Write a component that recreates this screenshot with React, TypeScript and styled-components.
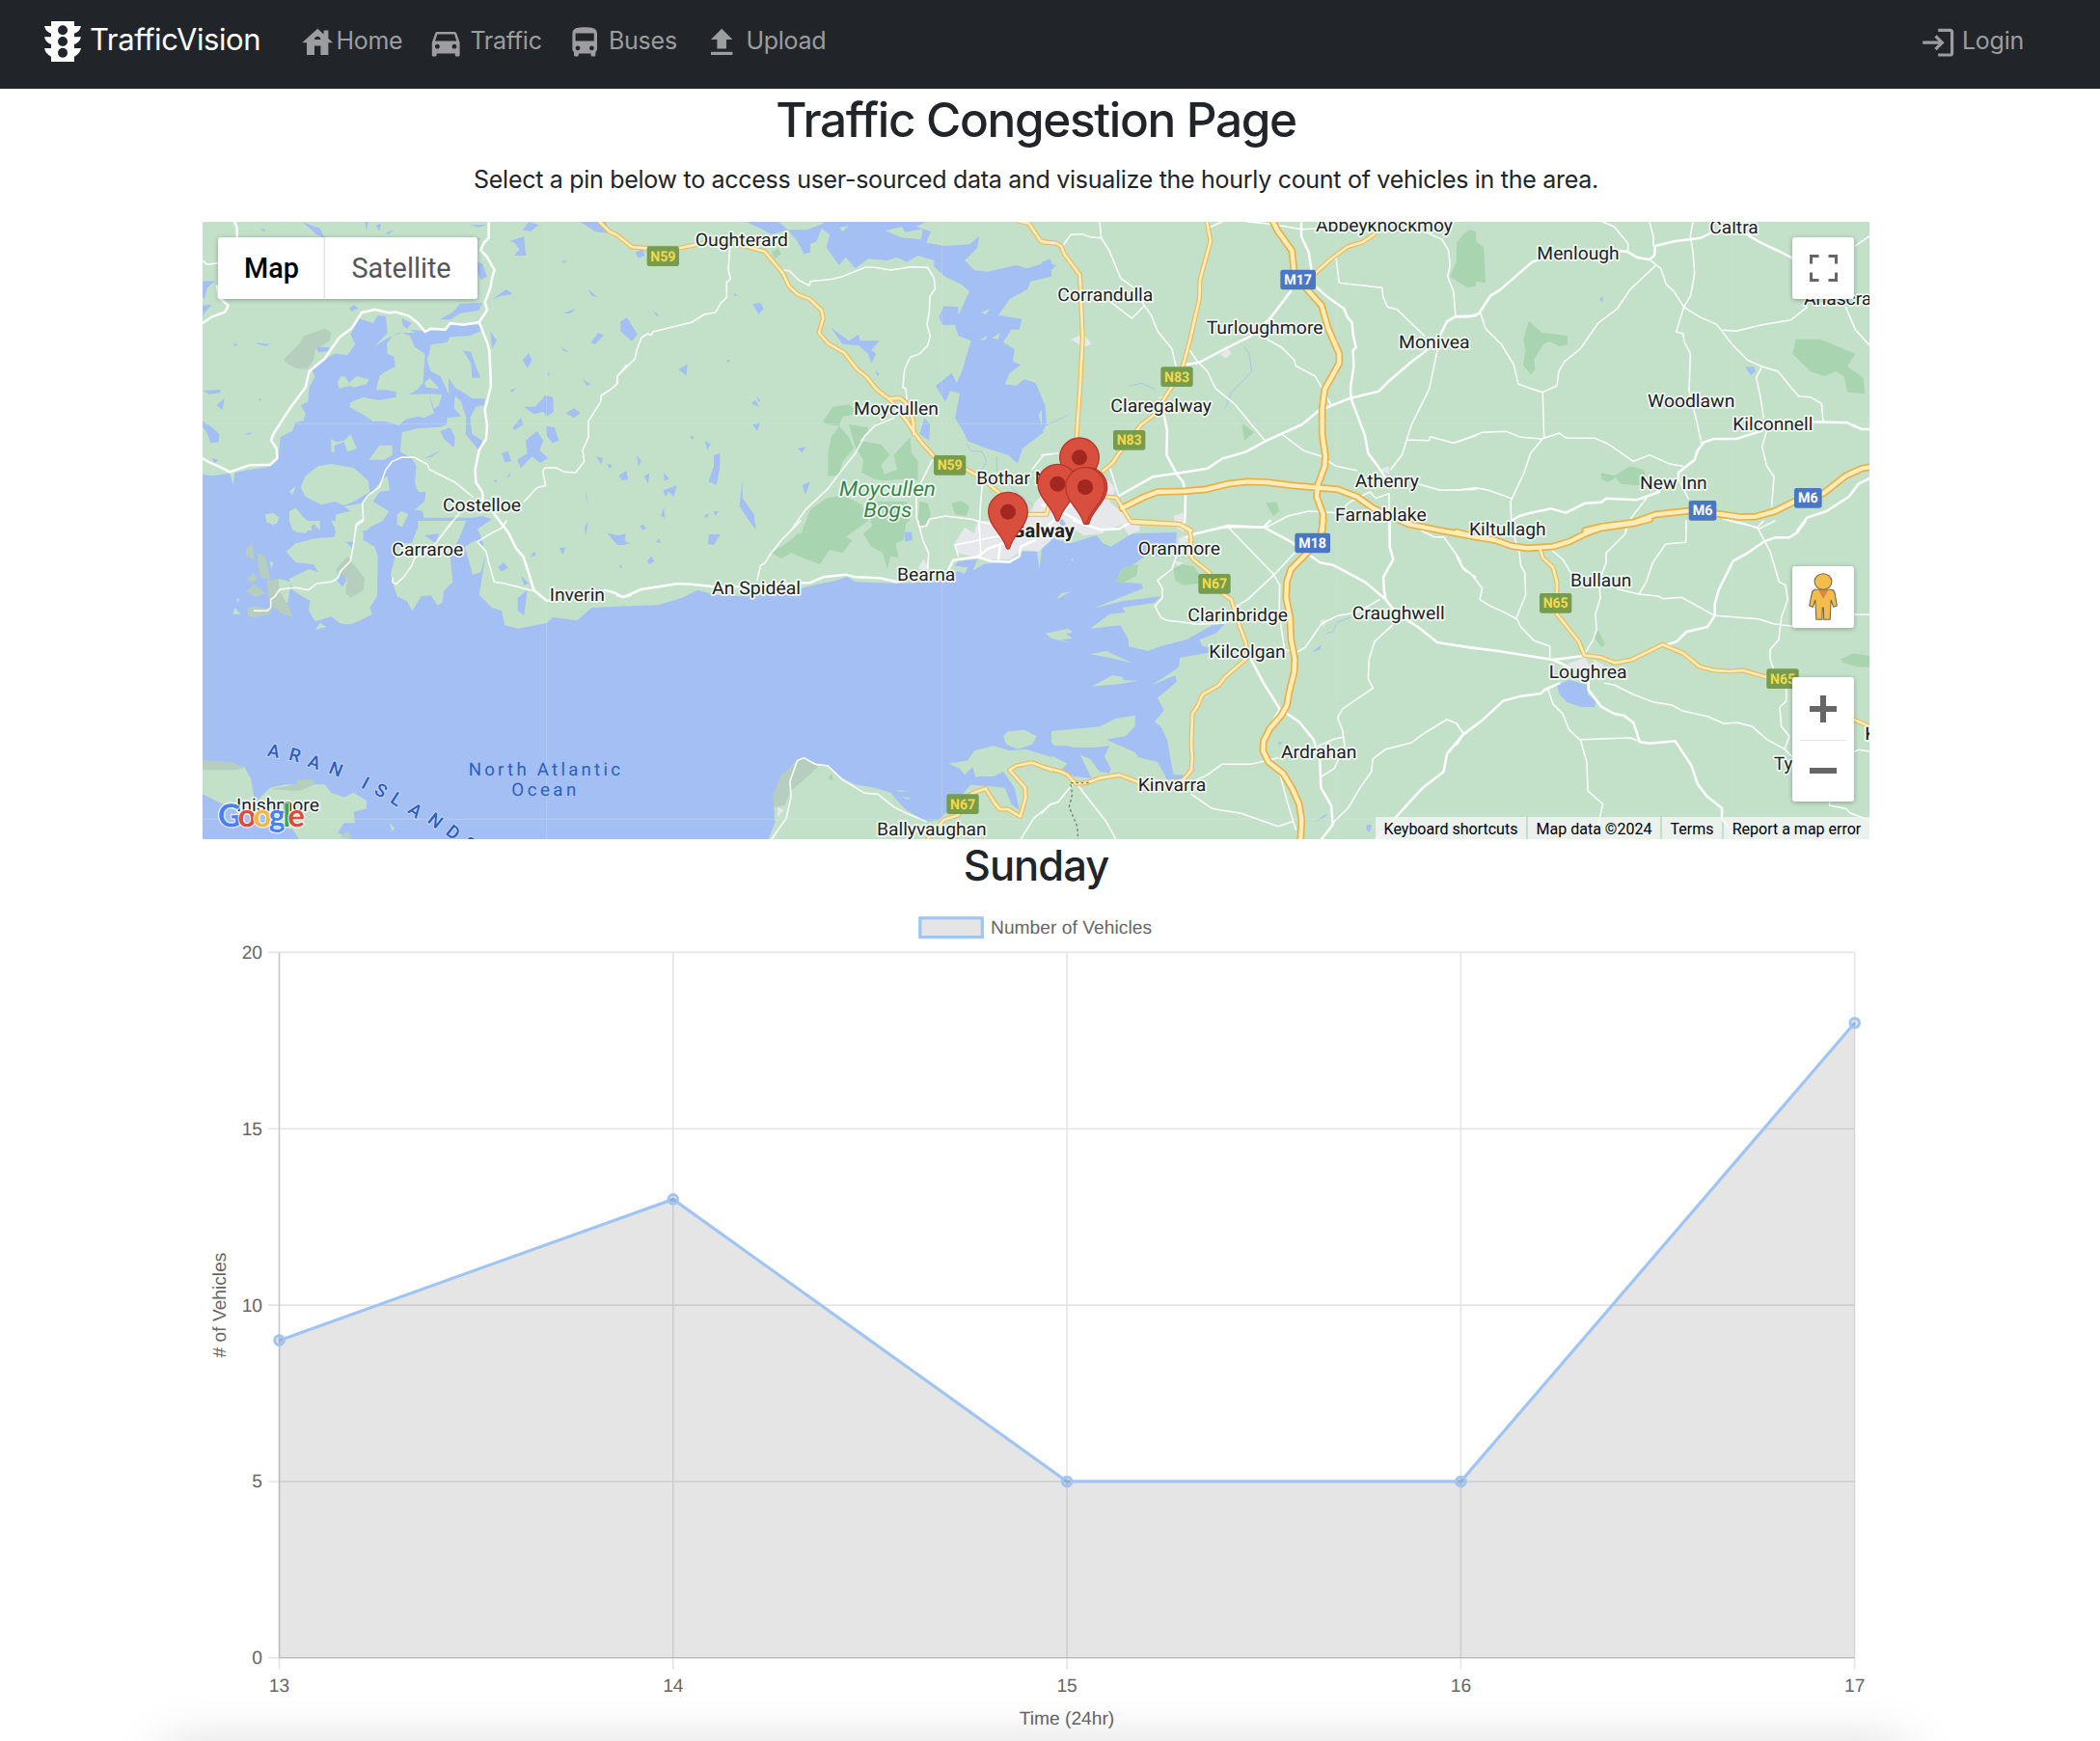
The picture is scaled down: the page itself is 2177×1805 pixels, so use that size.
import React from "react";
import styled, { createGlobalStyle } from "styled-components";
import { MdHouse, MdDirectionsCar, MdDirectionsBus, MdLogin } from "react-icons/md";

const GlobalStyle = createGlobalStyle`
  * { box-sizing: border-box; }
  body { margin: 0; background: #fff; color: #212529; font-family: Inter, "Noto Sans", sans-serif; }
`;

const Page = styled.div`
  height: 1805px;
  overflow: hidden;
  display: flex;
  flex-direction: column;
`;
const Navbar = styled.nav`
  height: 92px;
  flex: none;
  background: #212529;
  display: flex;
  align-items: flex-start;
  padding: 0 79px 0 46px;
`;
const Brand = styled.div`
  display: flex;
  width: 264px;
  gap: 9px;
  color: #fff;
  font-size: 31px;
  line-height: 42px;
  letter-spacing: -0.4px;
  padding-top: 20px;
  svg { margin-top: 2px; flex: none; }
`;
const NavItem = styled.a<{ $width?: number; $gap?: number }>`
  display: flex;
  align-items: center;
  width: ${(p) => (p.$width ? `${p.$width}px` : "auto")};
  gap: ${(p) => p.$gap ?? 6}px;
  height: 38px;
  margin-top: 25px;
  color: #9b9d9e;
  font-size: 25px;
  line-height: 38px;
  letter-spacing: -0.25px;
  white-space: nowrap;
  svg { width: 38.4px; height: 38.4px; flex: none; }
  span { position: relative; top: -2px; }
`;
const Spacer = styled.div`
  flex: 1;
`;
const Content = styled.main`
  width: 2148px;
  display: flex;
  flex-direction: column;
  align-items: center;
`;
const Title = styled.h2`
  margin: 0;
  height: 74px;
  padding-top: 2px;
  font-size: 49.5px;
  line-height: 61px;
  font-weight: 500;
  letter-spacing: -1.35px;
  white-space: nowrap;
`;
const Lead = styled.p`
  margin: 0;
  height: 64px;
  padding-top: 1px;
  font-size: 25px;
  line-height: 39px;
  letter-spacing: -0.29px;
  white-space: nowrap;
`;
const DayTitle = styled.h3`
  margin: 0;
  height: 65px;
  font-size: 43.5px;
  line-height: 54px;
  font-weight: 500;
  letter-spacing: -1px;
`;
const MapFrame = styled.section`
  position: relative;
  width: 1728px;
  height: 640px;
  overflow: hidden;
  font-family: Roboto, sans-serif;
  > svg { display: block; }
`;
const Control = styled.div<{ $top: number; $left?: number; $height: number }>`
  position: absolute;
  top: ${(p) => p.$top}px;
  ${(p) => (p.$left ? `left: ${p.$left}px;` : "right: 16px; width: 64px;")}
  height: ${(p) => p.$height}px;
  display: flex;
  align-items: center;
  justify-content: center;
  background: #fff;
  border-radius: 3px;
  box-shadow: 0 1px 5px rgba(0, 0, 0, 0.3);
`;
const ZoomStack = styled(Control)`
  flex-direction: column;
`;
const MapType = styled.button<{ $active?: boolean }>`
  width: ${(p) => (p.$active ? 111 : 158)}px;
  height: 64px;
  padding: 0;
  border: 0;
  background: none;
  font: ${(p) => (p.$active ? 500 : 400)} 28.8px/64px Roboto, sans-serif;
  color: ${(p) => (p.$active ? "#000" : "#565656")};
  box-shadow: ${(p) => (p.$active ? "inset -2px 0 2px -1px rgba(0,0,0,.16)" : "none")};
`;
const ZoomButton = styled.button`
  display: grid;
  place-items: center;
  width: 48px;
  height: 64px;
  padding: 0;
  border: 0;
  background: none;
  & + & { border-top: 1px solid #e6e6e6; }
`;
const Attribution = styled.footer`
  position: absolute;
  right: 0;
  bottom: 0;
  display: flex;
  gap: 2px;
`;
const Credit = styled.span<{ $width: number }>`
  width: ${(p) => p.$width}px;
  height: 23px;
  text-align: center;
  font-size: 16px;
  line-height: 25px;
  color: #000;
  background: rgba(245, 245, 245, 0.8);
  white-space: nowrap;
`;
const ChartBox = styled.section`
  width: 1728px;
  height: 870px;
  svg { display: block; }
`;
const BottomShade = styled.div`
  width: 1800px;
  height: 60px;
  flex: none;
  box-shadow: 0 6px 56px 0 rgba(0, 0, 0, 0.17);
`;

type Word = [number, number, number, string];
type Tile = {
  x: number; y: number;
  water?: string; land?: string; park?: string; rock?: string; urban?: string; lake?: string; stream?: string;
  minor?: string; main?: string; trunk?: string; motor?: string;
  words?: Word[];
  shields?: [number, number, string][];
};

const tiles: Tile[] = [
  {
    x: 0, y: 0,
    water: "M30 815L60 820 115 812 125 850 130 810 180 800 240 792 265 770 272 700 310 680 318 655 345 648 350 625 335 600 358 590 362 545 380 510 370 490 400 465 440 440 480 445 505 410 490 380 515 330 560 345 575 320 600 325 605 375 565 418 600 395 640 375 690 375 675 365 720 370 790 365 800 352 895 350 895 370 860 385 800 388 790 405 740 412 735 440 728 460 740 495 770 510 795 565 795 515 815 545 840 560 870 580 908 580 905 600 880 605 862 640 868 690 900 710 892 745 848 690 850 640 835 590 815 570 812 610 835 635 790 640 790 660 770 668 700 672 650 685 645 745 680 765 695 790 690 840 700 870 725 870 720 900 690 925 715 930 725 990 30 990Z M810 990L840 955 900 945 930 955 900 975 880 990Z",
    land: "M603 410L620 385 650 375 675 385 690 420 722 440 716 530 700 550 672 567 735 565 740 590 750 625 720 640 700 635 660 645 640 663 600 650 560 650 530 630 487 605 490 592 530 575 580 585 632 575 632 558 600 553 570 553 580 510 600 495 630 480 625 450 605 440Z M450 530L460 510 475 512 490 540 455 548Z M480 535L510 510 548 520 540 535 500 545Z M720 530L735 517 755 535 765 550 725 545Z M735 565L775 568 765 600 750 612Z M430 705L445 715 470 710 490 690 510 735 480 745 470 715 440 725 440 748 430 745Z M547 770L580 725 620 725 620 755 595 770Z M335 855L350 820 390 790 430 783 500 795 545 835 550 870 500 900 470 912 440 900 400 910 350 885Z M300 870L320 850 310 880Z M225 940L250 935 268 950 260 970 230 965Z M300 930L320 920 345 950 365 965 370 990 310 990 300 960Z M635 940L650 930 670 940 650 980 635 970Z M440 990L445 940 490 930 470 915 525 905 550 880 590 830 605 820 612 865 580 870 560 900 610 930 590 960 550 980 540 990Z",
    lake: "M985 90L1015 80 1030 75 1035 135 1000 135 1015 115 1000 95Z M1025 55L1045 30 1075 40 1050 60Z M870 150L900 160 915 200 895 210Z M930 270L975 240 995 255 960 260Z M1150 315L1190 300 1175 315Z M1228 240L1260 265 1240 260Z M1238 405L1260 375 1278 382 1250 412Z M1025 460L1045 438 1055 460 1040 485Z M985 555L1005 545 995 560Z M1028 605L1065 605 1095 570 1120 575 1122 620 1100 635 1090 620 1060 628Z M1160 625L1185 610 1205 625 1185 640Z M995 670L1020 640 1028 660 1000 678Z M1098 665L1125 670 1138 710 1118 718 1100 695Z M1035 710L1070 680 1090 710 1078 740 1105 765 1080 780 1055 760 1020 795 1008 770 1040 750Z M960 750L980 743 990 775 970 778Z M925 370L945 400 930 425Z M768 332L810 310 830 285 900 282 890 305 830 315 800 335Z M485 300L500 288 515 300 495 308Z M385 420L425 420 420 433 390 435Z M30 215L70 213 45 235 35 270 30 265Z M30 290L58 288 30 320Z M30 555L85 552 85 562 50 566Z M75 600L98 578 95 600 90 615Z M30 650L60 670 82 690 80 715 55 718 45 690 30 665Z M190 405L240 410 225 417Z M340 30L395 50 410 80 385 70Z M830 90L895 80 880 97Z M860 40L915 38 890 47Z M535 30L545 30 540 60Z M598 65L625 55 610 68Z M210 50L228 55 220 60Z M570 40L585 35 580 60Z M1205 30L1285 30 1290 65 1250 60Z M1325 820L1350 805 1350 835Z M840 430L865 435 880 480 895 515 868 515 865 470Z M650 330L680 345 665 362 652 350Z M770 680L800 670 815 700 812 732 780 705Z M722 765L775 738 740 762Z M1255 760L1275 765 1270 785Z M975 825L990 808 985 822Z M1212 520L1238 535 1225 540Z M1140 415L1168 435 1155 432Z M1145 153L1165 150 1155 158Z M1102 495L1112 508 1105 508Z M160 690L185 684 175 692Z M60 765L80 772 65 780Z M125 408L140 412 132 418Z M205 578L215 582 208 588Z M1288 780L1305 790 1295 798Z M935 835L948 832 940 842Z M1220 865L1230 910 1222 885Z",
    rock: "M285 455L330 410 345 385 410 362 430 375 425 400 380 430 375 460 355 488 320 485 285 465Z",
    main: "M30 765L45 775 80 790 115 808 175 787 240 785 262 765 260 735 243 710 250 690 305 605 350 545 362 495 410 455 455 390 495 360 525 312 565 303 610 313 630 310 670 322 700 345 722 372 740 362 785 365 800 345 840 350 890 342 915 305 908 280 925 235 930 205 938 180 915 140 895 118 905 95 920 80 920 30 M890 342L915 405 922 430 927 540 908 615 915 665 912 705 890 740 878 800 880 840 900 870 902 900 M130 30L137 50 137 90 M75 230L80 265 110 290 100 310 60 325 30 345",
    minor: "M505 990L508 970 530 955 527 905 545 880 580 855 600 800 620 775 650 762 690 763 730 785 735 800 815 840 870 885 M1350 475L1320 510 1318 535 1298 552 1270 570 1268 590 1230 650 1230 700 1212 740 1217 775 1190 810 1155 808 1130 795 1095 795 1088 805 1097 850 1070 857 1030 900 M830 935L785 990 M30 150L45 163 78 158",
    words: [[780, 1017, 932, "Costelloe"]],
  },
  {
    x: 0, y: 960,
    water: "M30 -10L530 -10 690 -10 870 -10 900 60 910 110 890 230 930 270 960 280 970 325 1010 335 1100 318 1120 300 1195 310 1240 270 1350 265 1350 1000 30 1000Z",
    land: "M300 0L320 35 350 38 375 10 395 30 395 0Z M228 0L255 0 250 15Z M290 95L320 70 380 55 440 50 445 30 430 0 530 0 530 60 565 80 575 110 573 235 550 270 558 290 520 310 490 322 460 320 430 298 380 312 360 280 365 250 340 235 310 215 300 180 360 150 390 160 375 135 320 130Z M125 290L130 270 148 290Z M135 245L145 240 140 255Z M238 125L250 130 245 150Z M265 180L305 190 295 255 270 250Z M380 340L395 318 415 330Z M615 165L640 70 680 70 700 20 700 0 850 0 830 50 800 110 808 190 780 220 775 255 760 262 740 232 710 235 682 280 665 250 635 235 620 190Z M845 80L880 60 915 90 895 160 870 168 860 130Z M30 770L50 750 160 765 180 800 190 860 190 920 130 900 30 850Z M200 870L240 830 290 820 370 820 410 820 430 845 470 860 500 845 540 870 540 895 500 905 505 940 470 940 450 970 490 990 330 990 310 960 250 940 200 900Z M610 940L628 955 620 965Z",
    rock: "M165 85L185 70 190 120 165 110Z M200 100L225 110 240 180 215 180 205 150Z M168 180L190 160 200 180 185 192Z M165 220L190 198 225 225 195 238Z M170 270L190 265 245 275 240 290 180 302 170 290Z M230 185L265 180 270 220 300 270 310 300 280 290 245 265 235 240Z M445 150L480 110 535 180 530 215 490 240 475 225 480 180 450 170Z M30 745L120 750 160 768 130 775 30 775Z M240 835L320 820 325 805 375 805 375 822 330 840Z M455 985L480 965 495 990Z",
    lake: "M948 145L965 130 980 145 960 158Z M1020 170L1045 195 1030 200Z M1010 240L1040 215 1030 295 1010 280Z M1140 85L1160 82 1150 105Z M1222 45L1230 0 1218 20Z M1288 38L1325 45 1345 40 1345 75 1320 75Z M1050 115L1060 95 1068 105Z M720 45L765 40 755 70Z M448 185L465 165 478 185 465 205Z M475 65L498 65 495 85Z",
    main: "M935 -25L980 35 1005 85 1028 112 1045 165 1060 215 1100 248 1120 248 M1280 215L1315 225 1335 237 1360 232",
    minor: "M530 0L508 15 500 70 490 125 460 155 450 178 430 190 385 195 360 215 320 208 270 213 255 235 242 245 242 270 230 280 190 280 M808 0L755 70 690 115 680 140 655 175 632 197 620 190 622 178 M975 0L960 22 925 40 885 65 912 95 920 130 937 190 970 195 1060 218",
    words: [[622, 838, 110, "Carraroe"], [1112, 1278, 250, "Inverin"], [138, 390, 903, "Inishmore"]],
  },
  {
    x: 1320, y: 0,
    water: "M400 30L440 48 480 70 530 55 560 90 580 130 600 125 600 100 620 90 635 50 660 70 650 110 690 165 710 140 740 175 780 145 840 150 870 140 900 155 935 135 985 150 985 170 1020 200 1070 225 1095 245 1075 290 1060 320 1060 295 1015 292 1000 325 1010 350 1050 350 1060 385 1100 400 1070 500 1055 530 1040 500 990 540 1020 590 1035 555 1065 565 1050 640 1080 690 1090 712 1150 735 1215 755 1245 782 1260 735 1325 685 1310 630 1330 600 1300 530 1265 520 1240 540 1205 535 1220 500 1255 475 1230 465 1235 425 1200 405 1225 365 1250 365 1258 332 1185 320 1220 270 1275 240 1285 215 1350 200 1350 150 1275 175 1240 165 1150 185 1110 180 1080 150 1120 110 1125 75 1095 100 1020 105 960 95 975 60 930 45 960 30Z",
    land: "M500 28L530 55 590 55 640 35 640 28Z M835 58L885 45 895 62 950 52 945 85 880 78Z M690 48L720 42 700 60Z M1125 398L1150 385 1145 397Z M1165 392L1190 375 1185 395Z M1130 312L1160 300 1145 318Z",
    lake: "M940 690L955 640 972 660 970 710Z M665 360L720 400 750 380 755 400 815 400 790 430 805 440 790 470 780 440 750 415 700 410Z M420 285L445 282 455 300 440 318Z M10 340L30 328 62 380 45 402 10 370Z M190 490L218 472 215 508Z M55 125L80 115 85 135 65 143Z M415 595L430 585 440 605Z M432 570L445 585 440 590Z M300 755L320 750 318 800 308 848 283 838 300 790Z M388 835L390 890 425 940 430 985 410 960 380 915Z M575 850L600 838 585 880Z M560 735L585 730 575 748Z M272 712L290 720 280 740Z M420 660L445 655 435 680Z M60 755L75 775 65 790Z M5 820L25 805 35 830 15 835Z M30 855L80 880 40 860Z M145 810L162 830 145 835Z M142 865L185 850 175 885 160 870 150 885Z M83 820L100 812 95 845Z M135 945L145 918 148 950Z M268 945L285 935 280 950Z M225 695L240 700 232 708Z M298 930L315 930 305 945Z M70 980L80 970 90 985Z M108 308L128 318 125 325Z M340 458L350 460 345 470Z M375 258L365 260 360 252Z M803 490L815 505 808 510Z",
    park: "M640 650L670 605 720 598 738 612 730 630 700 635 690 665 650 660Z M665 700L690 665 720 700 735 735 700 775 690 820 655 820 655 750Z M720 660L780 670 780 685 750 710 820 722 848 755 820 785 830 815 870 800 860 755 910 700 915 750 935 775 935 835 905 835 880 830 830 835 800 830 760 810 765 770 740 730Z M600 925L650 890 700 880 760 910 780 960 710 1010 640 1000 560 1030Z M770 900L900 900 910 960 860 990 800 1000Z M940 900L965 905 975 940 960 980 935 975Z M1040 905L1070 898 1095 915 1085 945 1050 940Z M480 125L500 112 510 130 490 145Z",
    stream: "M1085 720L1100 742 1135 745 1148 775 1130 810 1160 830 M1180 760L1180 800 1230 860 1290 910",
    trunk: "M-55 30L-25 60 0 72 45 108 90 112 190 112 250 100 330 88 420 112 458 122 515 190 535 232 560 255 598 270 635 305 640 330 627 375 655 408 705 437 745 488 775 512 805 550 850 585 900 650 930 695 945 715 985 760 1085 800 1130 825 1190 875 1270 940 1335 940 1345 900 M845 580L880 578 905 600 920 650 922 690 M1250 28L1280 35 1315 88 1330 93 1360 95",
    minor: "M0 535L0 510 55 455 60 430 75 390 95 378 105 383 110 372 200 350 230 343 270 318 305 312 320 285 340 265 340 218 352 208 345 180 350 110 M515 180L535 182 565 212 597 228 600 215 670 208 700 200 770 172 800 172 850 180 885 175 910 170 965 172 985 205 988 238 972 262 970 310 963 350 973 385 965 415 940 440 910 452 893 490 888 545 897 548 900 580 M860 640L800 665 770 695 740 750 700 800 655 860 585 925 540 990 M980 770L930 870 930 950 940 980 960 975 970 955 1020 945 1100 955 1180 975 M1290 800L1325 755 1350 753 M1135 850L1130 900 1125 990",
    words: [[245, 528, 107, "Oughterard"], [738, 996, 632, "Moycullen"], [1120, 1366, 848, "Bothar Na"]],
    shields: [[92, 106, "N59"], [984, 756, "N59"]],
  },
  {
    x: 1320, y: 960,
    water: "M0 270L45 265 125 262 200 240 250 215 300 230 400 235 560 215 590 205 680 185 715 175 740 190 800 192 870 195 1000 190 1040 165 1060 155 1080 165 1090 145 1050 140 1060 125 1120 120 1105 155 1140 135 1220 125 1260 95 1305 95 1312 150 1320 90 1315 70 1350 65 1350 340 1335 350 1350 360 1350 735 1270 710 1220 715 1170 700 1110 715 1090 745 1030 755 1065 770 1080 790 1105 765 1115 800 1090 830 1060 870 1030 900 1000 930 960 935 900 900 870 870 850 845 800 830 740 820 700 800 660 765 620 755 580 735 555 750 510 795 485 850 490 940 470 990 0 990Z M1085 820L1120 795 1170 795 1200 780 1235 830 1250 900 1225 880 1205 830 1150 825Z",
    land: "M1200 670L1215 655 1265 650 1305 670 1290 695 1245 710 1210 695Z M860 838L905 840 880 843Z M885 858L915 862 900 866Z",
    lake: "M892 35L915 35 918 60 895 65Z M285 42L320 42 300 75 282 72Z M93 125L105 110 115 125 100 135Z M120 65L130 55 135 70Z M70 15L90 20 80 30Z M412 0L430 10 430 28Z M0 65L15 60 40 70 0 76Z M5 138L15 140 12 150Z",
    park: "M480 100L540 60 560 40 600 45 640 0 700 10 690 40 730 60 700 100 660 90 630 135 590 120 540 100 510 118Z M765 40L800 10 840 -10 900 -10 890 60 865 70 875 115 850 110 840 150 825 100 790 80Z M655 800L668 785 670 808Z",
    rock: "M510 790L580 735 625 765 540 840 520 885 485 890 485 850Z",
    urban: "M1045 75L1080 20 1110 40 1120 0 1350 0 1350 60 1310 95 1260 90 1220 120 1140 120 1060 100Z M935 150L952 118 970 150Z M498 890L518 900 500 920Z",
    main: "M0 232L20 237 75 213 190 195 230 197 300 205 360 205 450 200 600 192 640 175 710 167 740 175 815 178 870 190 M1030 150L1045 122 1120 112 1160 125 1220 128 1250 110 1255 80 1300 60 M1120 112L1155 85 1230 60 M1185 120L1190 80",
    minor: "M570 0L510 60 475 105 460 130 445 140 435 185 M935 0L950 60 968 100 965 150 M960 18L970 0 M1050 75L1100 65 1170 50 1240 45 M1125 0L1130 100 M1050 75L1060 110 M480 990L525 925 540 860 537 810 560 745 580 737 615 757 655 762 700 805 770 847 810 850 860 890 900 910 960 935 M1255 990L1295 925 1350 880",
    trunk: "M965 990L1015 930 1060 915 1100 850 1145 832 1175 880 1190 897 1215 897 1253 920 1270 860 1268 830 1220 775 1240 762 1290 752 1350 775",
    words: [[297, 567, 228, "An Spidéal"], [873, 1048, 188, "Bearna"], [810, 1145, 978, "Ballyvaughan"]],
    shields: [[1024, 850, "N67"]],
  },
  {
    x: 2640, y: 0,
    lake: "M0 155L25 145 28 160 45 165 20 190 0 190Z M0 590L10 600 15 660 0 685Z",
    stream: "M630 418L645 440 653 495 620 530 590 560 570 610 M275 540L310 532 350 550 M15 662L80 632",
    park: "M1310 70L1330 55 1350 60 1350 230 1325 235 1270 200 1290 150 1290 95Z M622 655L660 685 630 710Z M697 905L730 900 738 930 720 945Z",
    urban: "M-60 990L-20 900 20 860 120 870 190 815 230 860 210 900 280 960 200 990Z M220 935L260 905 275 950 235 965Z M360 575L390 568 380 590Z M410 945L440 935 440 970 415 965Z M90 395L130 378 155 410 130 420Z M555 440L580 425 590 440 570 455Z M1050 800L1080 790 1080 815Z",
    main: "M440 475L488 468 580 420 650 385 710 330 775 245 M850 230L890 265 940 300 950 325 965 345 968 380 977 420 968 430 970 480 960 545 962 580 1005 695 1015 750 1045 790 1065 820 M235 885L345 823 420 812 515 797 560 767 635 745 700 710 810 660 860 618 960 578 1048 557 1080 525 1150 465 1190 435 1240 380 1260 340 1285 325 1350 322 M380 630L390 680 388 755 420 815 440 840 447 880 445 960 437 975 M807 28L807 75 830 125 840 190 M0 910L60 930 130 970 M20 975L100 900",
    minor: "M180 30L185 80 210 120 245 205 300 245 318 290 340 320 360 370 405 425 417 478 M65 105L90 70 125 68 150 77 185 80 M215 280L280 330 315 295 M450 415L485 465 515 495 540 548 600 597 695 712 M700 395L745 420 785 460 790 478 850 510 870 545 900 600 M520 48L560 30 M640 30L700 35 810 53 860 50 M915 140L925 220 1058 235 1062 265 1075 295 1105 302 1190 385 M1200 65L1245 85 1265 120 1270 165 1262 200 1280 245 1287 325 M1230 430L1205 550 1150 660 1120 755 1085 800 M1135 708L1205 710 1208 698 1280 718 1350 695 M750 693L815 742 870 760 915 790 980 803 M1170 845L1240 865 1350 862 M210 790L240 885 M470 1000L575 980 700 980 765 945 830 930 920 935 960 900 1020 870 1040 890 1080 875 1080 990 M0 755L50 750",
    trunk: "M0 92L45 97 60 105 70 130 118 195 122 270 127 390 118 560 108 700 M513 28L525 90 492 210 490 270 460 400 440 475 400 550 380 580 350 630 310 660 240 750 220 780 190 805 M200 885L232 888 275 960 430 970 465 990 M850 190L900 145 950 108 1000 92 1035 68",
    motor: "M718 28L735 60 778 120 785 190 825 240 870 290 890 360 925 440 925 470 880 550 872 610 872 690 882 760 880 790 858 850 855 885 875 940 872 990 M250 920L320 885 360 870 440 868 510 862 580 845 640 838 700 840 780 850 858 857 920 862 980 885 1030 920 1080 945 1140 970 1240 990 1350 1010",
    words: [[855, 1275, 60, "Abbeyknockmoy"], [52, 343, 278, "Corrandulla"], [515, 872, 378, "Turloughmore"], [1113, 1328, 425, "Monivea"], [217, 525, 622, "Claregalway"], [977, 1170, 855, "Athenry"], [915, 1193, 960, "Farnablake"]],
    shields: [[370, 481, "N83"], [222, 678, "N83"], [742, 179, "M17"]],
  },
  {
    x: 2640, y: 960,
    water: "M0 30L50 60 90 70 170 45 190 70 215 80 280 40 420 35 415 80 370 110 330 108 310 118 280 140 250 150 230 190 310 195 315 210 160 272 250 250 370 235 350 255 250 270 260 285 210 290 150 335 245 325 270 370 270 390 330 405 370 390 450 370 530 325 570 320 540 350 490 370 500 390 530 395 520 410 430 425 425 455 390 480 340 512 415 480 420 500 385 530 360 550 380 590 350 625 370 640 390 680 400 740 410 790 440 790 440 805 390 805 360 750 300 735 290 720 200 680 260 670 290 640 290 605 230 615 180 640 20 655 10 670 40 700 80 700 100 705 160 705 210 700 195 735 215 770 210 785 180 780 150 740 120 730 155 800 100 795 60 775 80 755 0 715Z",
    land: "M12 350L80 335 97 345 75 352 95 365 60 370 90 382 30 365Z M155 515L220 480 250 485 255 495 298 498 240 508Z M150 415L200 405 245 425 280 442 210 425Z M88 120L100 118 95 125Z M60 225L45 245 90 220Z",
    lake: "M838 410L870 385 865 400Z M1010 945L1025 945 1020 970 1010 962Z M845 940L887 910 885 918Z M732 690L748 688 740 697Z M55 0L65 -5 75 10 60 20Z",
    stream: "M885 350L905 345 920 315 960 300",
    urban: "M70 -20L200 0 190 40 130 45 90 20Z M250 10L300 0 305 30 270 45Z M410 15L445 15 440 35Z M410 125L440 130 425 142Z M425 55L450 45 455 65 430 75Z M865 310L890 305 875 330Z",
    park: "M410 150L430 135 470 140 490 165 490 195 440 200 415 185Z M230 190L255 145 300 135 295 170 250 195Z",
    main: "M100 0L185 28 240 25 275 5 M450 50L480 40 580 15 690 20 775 65 865 130 905 137 1005 190 1070 245 1105 290 1170 330 1230 378 1350 397 M690 20L710 0 M1082 0L1082 80 1093 120 1062 175 1065 220 1070 245 M650 430L690 505 740 585 800 625 845 680 865 745 868 830 900 885 905 945 870 990 M1350 635L1310 665 1260 725 1250 780 1185 830 1130 890 1040 990",
    minor: "M575 15L720 165 740 200 738 290 755 400 790 410 M790 95L720 170 640 245 605 265 M430 75L405 150 360 185 375 210 375 240 352 265 370 300 390 310 440 315 480 322 570 318 M790 410L820 393 870 320 920 295 980 285 1050 245 M1090 325L1035 375 1018 430 1015 490 1030 520 935 585 920 612 935 650 942 700 910 770 870 795 M860 700L910 678 940 672 M740 585L710 635 M450 820L515 790 560 757 650 757 735 737 M465 850L530 895 620 910 735 950 780 935 M740 785L765 880 790 960 M905 940L955 890 990 830 1025 780 1030 740 1070 710 1150 690 1190 660 1260 618 1290 630 1310 660 M1180 30L1220 50 1250 50 1300 120 1310 150 1350 175 M110 820L200 935 230 990 M0 910L25 882 50 875 95 820",
    trunk: "M280 5L430 12 460 30 465 60 458 100 470 120 520 160 560 225 590 245 605 300 635 380 640 425 600 460 570 485 550 512 500 540 485 575 468 600 465 700 468 735 465 775 440 805 400 820 300 812 280 805 240 790 180 800 140 815 105 817 80 790 60 780 0 765",
    motor: "M875 0L868 45 825 100 775 150 762 190 760 240 772 300 775 370 787 430 785 470 770 530 762 575 745 605 710 645 690 685 688 715 705 750 750 785 780 835 800 880 808 930 805 990",
    words: [[302, 552, 107, "Oranmore"], [457, 762, 314, "Clarinbridge"], [523, 755, 427, "Kilcolgan"], [968, 1250, 308, "Craughwell"], [747, 976, 740, "Ardrahan"], [302, 508, 842, "Kinvarra"]],
    shields: [[787, 38, "M18"], [487, 165, "N67"]],
  },
  {
    x: 3930, y: 0,
    lake: "M898 482L925 480 930 495 915 507Z M443 270L455 262 455 280Z",
    park: "M0 100L20 75 40 55 55 60 60 90 85 110 90 220 65 215 40 235 0 215Z M215 370L225 338 265 375 295 378 345 385 345 412 320 418 290 402 270 410 240 460 245 490 230 505 207 475 215 430 207 400Z M1055 395L1130 395 1240 440 1215 480 1265 515 1270 565 1215 560 1205 510 1180 495 1145 510 1100 495 1045 440Z M450 810L490 820 540 790 580 800 590 820 570 850 510 845 495 825 470 840 450 830Z",
    main: "M0 325L40 325 70 315 105 260 135 242 235 155 250 150 M500 120L530 122 560 140 600 147 615 135 618 105 680 90 760 80 800 60 M905 70L940 92 1000 120 1050 145 M170 960L195 945 230 935 295 922 340 935 400 905 450 902 465 890 560 895 630 870 M690 830L690 810 740 770 750 740 770 715 800 705 870 705 950 680 M1105 652L1215 655 1260 675 1290 675 M1060 990L1090 950 1150 930 1220 885 1250 845 1290 825",
    minor: "M455 30L490 45 533 97 533 120 M600 30L612 75 612 105 M735 30L727 75 735 120 740 190 728 260 707 295 683 372 705 378 707 400 727 440 723 555 738 615 762 718 M600 147L635 175 652 225 675 245 707 295 755 325 810 350 860 415 905 460 950 480 1000 495 1040 545 1065 573 1100 575 1135 595 1140 650 M620 165L540 240 500 300 440 345 385 425 335 465 318 495 312 540 268 560 230 548 192 535 178 475 140 412 90 362 75 315 M268 560L272 700 230 750 210 810 168 900 170 960 M0 715L80 685 155 682 200 700 265 705 320 687 340 702 430 703 470 720 550 775 600 755 660 782 703 790 M830 367L870 370 950 350 1040 335 1090 295 M1210 295L1240 365 1290 420 M1240 105L1290 70 M950 480L932 515 945 575 955 640 M963 685L950 730 965 790 987 822 980 915 M0 865L60 857 100 865 170 890 M590 890L540 955 525 990 M690 830L720 890 M715 960L713 990 M830 955L900 970 940 985 990 960",
    motor: "M400 990L450 978 550 965 620 940 730 928 810 938 880 948 930 947 990 930 1050 900 1140 875 1210 820 1260 797 1290 792",
    words: [[790, 935, 67, "Caltra"], [253, 503, 148, "Menlough"], [597, 862, 607, "Woodlawn"], [862, 1105, 678, "Kilconnell"], [573, 776, 862, "New Inn"], [1083, 1352, 288, "Anascragh"]],
    shields: [[722, 897, "M6"], [1050, 858, "M6"]],
  },
  {
    x: 3930, y: 960,
    lake: "M312 510L350 495 405 510 408 540 432 560 430 580 385 578 345 565 320 540Z",
    park: "M1195 430L1235 412 1285 420 1285 455 1250 455 1200 440Z M425 360L440 340 462 385 450 392Z",
    urban: "M345 445L400 425 420 460 360 455Z M425 430L460 450 430 460Z",
    main: "M0 388L130 405 300 432 395 420 M300 432L350 455 M0 695L20 665 80 620 145 560 200 545 260 538 275 525 320 505 M410 500L410 525 450 578 490 600 520 605 550 628 570 688 600 692 680 685 730 760 750 820 780 858 825 893 825 925 870 990 M1085 0L1060 35 1035 52 990 52 955 65 905 100 860 125 815 215 803 260 803 295 780 330 715 345 685 375 645 388",
    minor: "M180 50L195 100 200 140 212 160 215 230 187 300 M0 110L15 140 45 165 80 210 72 245 105 265 140 280 187 305 200 330 240 372 290 390 290 430 M295 90L330 120 355 160 M530 20L525 40 490 75 465 100 465 130 450 170 445 210 447 240 432 290 435 340 425 370 400 410 M715 0L713 67 650 72 610 130 590 190 567 228 630 235 640 242 700 238 740 260 803 295 940 305 985 320 1045 328 M500 212L567 228 M850 0L935 20 975 95 1003 190 1023 200 1030 245 1010 300 1002 370 975 400 975 430 985 460 M935 20L955 0 M1237 292L1290 292 M285 525L300 570 330 600 350 650 385 682 405 750 408 840 455 880 445 925 440 960 M385 680L540 675 568 685 M460 505L490 510 550 540 610 563 670 573 700 590 780 608 830 630 875 628 920 640 965 680 1020 710 1045 735 M1025 520L1025 560 1005 580 1010 640 1035 670 1020 710 M1160 870L1160 885 1210 895 1225 910 1290 932 M1236 718L1250 712 1290 718 M0 630L20 660",
    trunk: "M260 90L268 115 300 145 312 190 312 290 380 375 397 418 450 425 492 442 545 432 640 385 705 412 755 453 800 465 850 468 890 465 960 485 1000 487 M1236 618L1290 642",
    motor: "M0 35L60 50 120 60 170 78 220 85 300 80 350 65 400 40 450 22 550 8 600 -5",
    words: [[42, 275, 46, "Kiltullagh"], [357, 541, 204, "Bullaun"], [290, 527, 490, "Loughrea"], [990, 1165, 775, "Tynagh"], [1272, 1480, 683, "Killimor"]],
    shields: [[258, 225, "N65"], [964, 460, "N65"]],
  },
];

type ShapeKey = "water" | "land" | "park" | "rock" | "urban" | "lake" | "stream" | "minor" | "main" | "trunk" | "motor";

const Layer = ({ name, fill = "none", stroke, width }: { name: ShapeKey; fill?: string; stroke?: string; width?: number }) => (
  <g fill={fill} stroke={stroke} strokeWidth={width} strokeLinejoin="round" strokeLinecap="round">
    {tiles.map((t) => t[name] && <path key={`${t.x}-${t.y}`} transform={`translate(${t.x} ${t.y})`} d={t[name]} />)}
  </g>
);

const halo = { stroke: "#f4faf5", strokeWidth: 10, strokeLinejoin: "round" as const, paintOrder: "stroke", lengthAdjust: "spacingAndGlyphs" as const };

const Shield = ({ x, y, code }: { x: number; y: number; code: string }) => {
  const motorway = code[0] === "M";
  const w = motorway ? (code.length > 2 ? 110 : 86) : 100;
  const inset = motorway ? 12 : 11;
  return (
    <g transform={`translate(${x} ${y})`}>
      <rect width={w} height={62} rx={7} fill={motorway ? "#4a77c4" : "#769d4e"} />
      <text x={inset} y={46} textLength={w - inset * 2} lengthAdjust="spacingAndGlyphs" fontSize={44} fontWeight={700} fill={motorway ? "#fff" : "#f6d94b"}>{code}</text>
    </g>
  );
};

const Pin = ({ x, y }: { x: number; y: number }) => (
  <g transform={`translate(${x} ${y})`}>
    <path d="M-5 112C-14 72-61 44-61 0A61 61 0 1 1 61 0C61 44 14 72 5 112Q0 120-5 112Z" fill="#d84f3e" stroke="#b7352b" strokeWidth={4} />
    <circle r={24} fill="#a2271e" />
  </g>
);

const aran: [number, number, number, string][] = [
  [252, 715, 12, "A"], [318, 728, 15, "R"], [378, 750, 19, "A"], [445, 772, 22, "N"], [537, 815, 28, "I"], [585, 838, 30, "S"],
  [634, 865, 33, "L"], [692, 900, 36, "A"], [755, 932, 38, "N"], [810, 968, 38, "D"], [860, 1004, 42, "S"],
];

const MapDrawing = () => (
  <svg width={1728} height={640} viewBox="30 30 5184 1920" fontFamily="Roboto, sans-serif" textRendering="geometricPrecision">
    <rect x={30} y={30} width={5184} height={1920} fill="#c3e1c9" />
    <Layer name="water" fill="#a3bff4" />
    <Layer name="land" fill="#c3e1c9" />
    <Layer name="park" fill="#a9d4b0" />
    <Layer name="rock" fill="#b6cebe" />
    <Layer name="urban" fill="#e6e8ec" />
    <Layer name="lake" fill="#a3bff4" />
    <Layer name="stream" stroke="#a9c6ea" width={3} />
    <Layer name="minor" stroke="#fff" width={4.5} />
    <Layer name="main" stroke="#fff" width={7.5} />
    <Layer name="trunk" stroke="#e9bb5b" width={15} />
    <Layer name="motor" stroke="#e9b044" width={23} />
    <Layer name="trunk" stroke="#ffecb9" width={8} />
    <Layer name="motor" stroke="#ffecb9" width={13} />
    <path d="M2730 1780L2735 1810 2725 1850 2750 1910 2753 1950M2730 1775H2790" fill="none" stroke="#777" strokeWidth={4} strokeDasharray="8 8" />
    <path d="M1100 30V1950M2330 30V1950M3558 30V1950M4787 30V1950M30 658H5214M30 1888H5214" stroke="#d8dfe8" strokeOpacity={0.4} strokeWidth={3} />
    {tiles.map((t) => (
      <g key={`${t.x}-${t.y}`} transform={`translate(${t.x} ${t.y})`} fontSize={56} fill="#202124">
        {t.shields?.map(([x, y, code]) => <Shield key={`${x}`} x={x} y={y} code={code} />)}
        {t.words?.map(([a, b, y, s]) => (
          <text key={s} x={a - 3} y={y - 1} textLength={b - a + 6} {...halo}>{s}</text>
        ))}
      </g>
    ))}
    <g fill="#37864a" fontSize={64} fontStyle="italic">
      <text x={2010} y={881} textLength={300} {...halo}>Moycullen</text>
      <text x={2086} y={949} textLength={150} {...halo}>Bogs</text>
    </g>
    <g fill="#2f5fbd" fontSize={56}>
      <text x={857} y={1752} textLength={472}>North Atlantic</text>
      <text x={991} y={1816} textLength={201}>Ocean</text>
      {aran.map(([x, y, a, s]) => (
        <text key={x} transform={`translate(${x} ${y + 960}) rotate(${a})`} y={20} textAnchor="middle" fontWeight={500} stroke="#c4d6f8" strokeWidth={6} paintOrder="stroke">{s}</text>
      ))}
    </g>
    <text x={2546} y={1012} fontSize={60} fontWeight={700} textLength={196} fill="#202124" {...halo}>Galway</text>
    <Pin x={2757} y={763} />
    <Pin x={2689} y={845} />
    <Pin x={2782} y={855} />
    <Pin x={2775} y={855} />
    <Pin x={2535} y={932} />
    <text x={78} y={1910} fontFamily="Lato, sans-serif" fontSize={98} fontWeight={700} textLength={270} stroke="#fff" strokeWidth={8} strokeOpacity={0.75} paintOrder="stroke">
      <tspan fill="#4a80ee">G</tspan><tspan fill="#dd4b3e">o</tspan><tspan fill="#f3b93c">o</tspan><tspan fill="#4a80ee">g</tspan><tspan fill="#3fa657">l</tspan><tspan fill="#dd4b3e">e</tspan>
    </text>
  </svg>
);

const Pegman = () => (
  <svg width={30} height={50} viewBox="0 0 84 150" preserveAspectRatio="none">
    <path d="M18 52H66Q74 54 76 64L82 102 72 106 65 84 62 145H44L43 108H40L39 145H22L19 84 12 106 2 102 9 64Q11 54 18 52Z" fill="#f3bd4b" stroke="#6f6750" strokeWidth={3} />
    <path d="M28 52H58L42 80Z" fill="#d68844" />
    <circle cx={42} cy={27} r={25} fill="#f3bd4b" stroke="#6f6750" strokeWidth={3} />
  </svg>
);

const points = [{ hour: 13, count: 9 }, { hour: 14, count: 13 }, { hour: 15, count: 5 }, { hour: 16, count: 5 }, { hour: 17, count: 18 }];
const px = (h: number) => 79.5 + (h - 13) * 408.3;
const py = (v: number) => 783.8 - v * 36.57;

const Chart = () => {
  const line = points.map((p) => `${px(p.hour)} ${py(p.count)}`).join("L");
  return (
    <svg width={1728} height={870} viewBox="0 0 1728 870" fontFamily='"Liberation Sans", Arial, sans-serif' fontSize={19.2} fill="#666" textRendering="geometricPrecision">
      <rect x={743.8} y={16.8} width={64.5} height={19.8} fill="#e5e5e5" stroke="#a0c5f5" strokeWidth={3.2} />
      <text x={817} y={33} textLength={167}>Number of Vehicles</text>
      {[0, 5, 10, 15, 20].map((v) => (
        <g key={v}>
          <path d={`M68 ${py(v)}H${px(17)}`} stroke="#e5e5e5" strokeWidth={1.6} />
          <text x={62} y={py(v) + 6.5} textAnchor="end">{v}</text>
        </g>
      ))}
      {points.map(({ hour }) => (
        <g key={hour}>
          <path d={`M${px(hour)} ${py(20)}V${py(0) + 12}`} stroke="#e5e5e5" strokeWidth={1.6} />
          <text x={px(hour)} y={818.5} textAnchor="middle">{hour}</text>
        </g>
      ))}
      <path d={`M${line}L${px(17)} ${py(0)}L${px(13)} ${py(0)}Z`} fill="#000" fillOpacity={0.1} />
      <path d={`M${px(13)} ${py(20)}V${py(0)}H${px(17)}`} fill="none" stroke="#000" strokeOpacity={0.12} strokeWidth={1.6} />
      <path d={`M${line}`} fill="none" stroke="#a0c5f5" strokeWidth={3.2} />
      {points.map((p) => (
        <circle key={p.hour} cx={px(p.hour)} cy={py(p.count)} r={4.8} fill="#000" fillOpacity={0.1} stroke="#a0c5f5" strokeWidth={3} />
      ))}
      <text x={896} y={853} textAnchor="middle">Time (24hr)</text>
      <text transform="translate(24 418) rotate(-90)" textAnchor="middle">{"# of Vehicles"}</text>
    </svg>
  );
};

const TrafficLogo = () => (
  <svg width={38} height={42} viewBox="0 0 114 126">
    <path d="M21 0H93V15H114Q110 33 93 38V49H114Q110 67 93 72V84H114Q110 102 93 110V126H21V110Q4 102 0 84H21V72Q4 67 0 49H21V38Q4 33 0 15H21Z" fill="#fff" />
    <g fill="#212529"><circle cx={57} cy={28} r={15} /><circle cx={57} cy={63} r={15} /><circle cx={57} cy={98} r={15} /></g>
  </svg>
);

const UploadIcon = () => (
  <svg viewBox="0 0 24 24" fill="currentColor"><path d="M5 20h14v-2H5v2zm0-10h4v6h6v-6h4l-7-7-7 7z" /></svg>
);

const FullscreenIcon = () => (
  <svg width={29} height={28} viewBox="0 0 29 28" fill="none" stroke="#666" strokeWidth={3}>
    <path d="M1.5 9.5V1.5H9.5M19.5 1.5H27.5V9.5M27.5 18.5V26.5H19.5M9.5 26.5H1.5V18.5" />
  </svg>
);

export default function App() {
  return (
    <Page>
      <GlobalStyle />
      <Navbar>
        <Brand><TrafficLogo />TrafficVision</Brand>
        <NavItem $width={133} $gap={0}><MdHouse /><span>Home</span></NavItem>
        <NavItem $width={143.6}><MdDirectionsCar /><span>Traffic</span></NavItem>
        <NavItem $width={142.4}><MdDirectionsBus /><span>Buses</span></NavItem>
        <NavItem><UploadIcon /><span>Upload</span></NavItem>
        <Spacer />
        <NavItem $gap={6}><MdLogin /><span>Login</span></NavItem>
      </Navbar>
      <Content>
        <Title>Traffic Congestion Page</Title>
        <Lead>Select a pin below to access user-sourced data and visualize the hourly count of vehicles in the area.</Lead>
        <MapFrame>
          <MapDrawing />
          <Control $top={16} $left={16} $height={64}>
            <MapType $active>Map</MapType>
            <MapType>Satellite</MapType>
          </Control>
          <Control $top={16} $height={64}><FullscreenIcon /></Control>
          <Control $top={357} $height={64}><Pegman /></Control>
          <ZoomStack $top={472} $height={129}>
            <ZoomButton><svg width={30} height={30}><path d="M1 15H29M15 1V29" stroke="#666" strokeWidth={6} /></svg></ZoomButton>
            <ZoomButton><svg width={30} height={30}><path d="M1 15H29" stroke="#666" strokeWidth={6} /></svg></ZoomButton>
          </ZoomStack>
          <Attribution>
            <Credit $width={156}>Keyboard shortcuts</Credit>
            <Credit $width={137}>Map data ©2024</Credit>
            <Credit $width={62}>Terms</Credit>
            <Credit $width={151}>Report a map error</Credit>
          </Attribution>
        </MapFrame>
        <DayTitle>Sunday</DayTitle>
        <ChartBox><Chart /></ChartBox>
        <BottomShade />
      </Content>
    </Page>
  );
}
